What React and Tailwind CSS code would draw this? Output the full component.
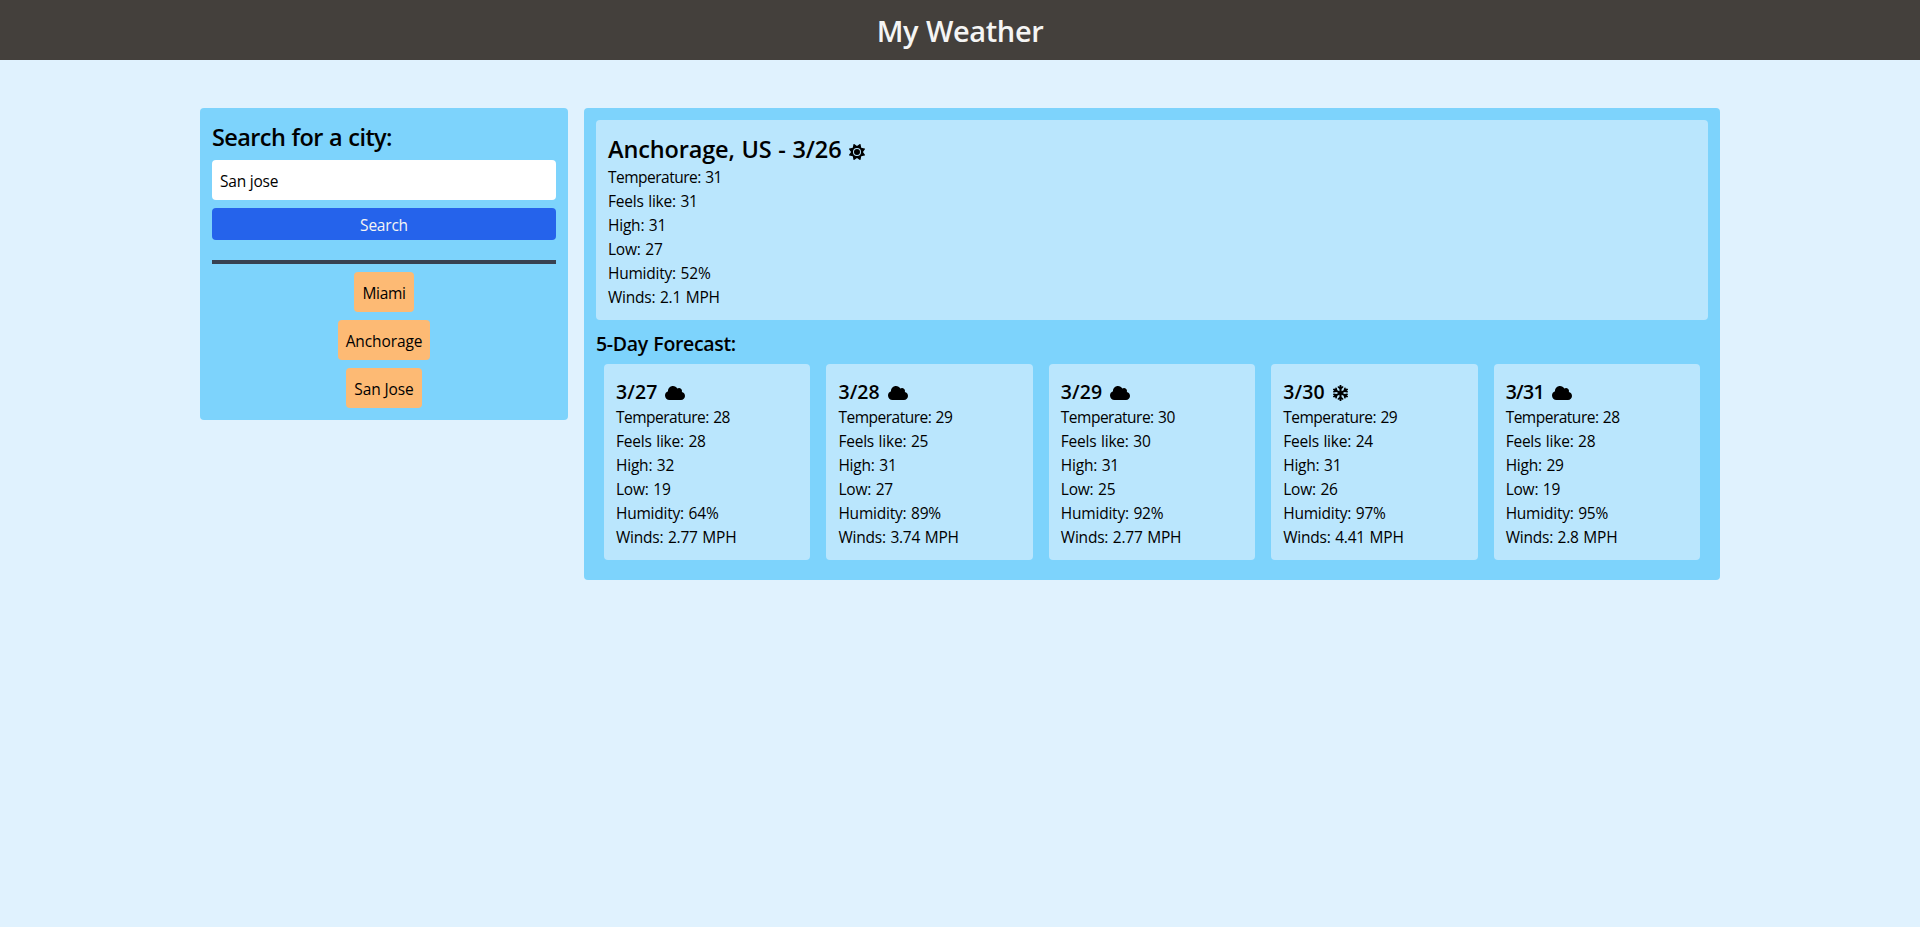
import { FaSun, FaCloud, FaSnowflake } from "react-icons/fa6";

const ICONS = {
  sun: <FaSun className="mt-1.5 h-4 w-4" />,
  cloud: <FaCloud className="mt-0.5 h-4 w-5" />,
  snow: <FaSnowflake preserveAspectRatio="none" className="mt-0.5 h-4 w-[15px]" />,
};

const current = { temp: 31, feels: 31, high: 31, low: 27, humidity: 52, wind: "2.1" };

const forecast = [
  { date: "3/27", icon: "cloud", temp: 28, feels: 28, high: 32, low: 19, humidity: 64, wind: "2.77" },
  { date: "3/28", icon: "cloud", temp: 29, feels: 25, high: 31, low: 27, humidity: 89, wind: "3.74" },
  { date: "3/29", icon: "cloud", temp: 30, feels: 30, high: 31, low: 25, humidity: 92, wind: "2.77" },
  { date: "3/30", icon: "snow", temp: 29, feels: 24, high: 31, low: 26, humidity: 97, wind: "4.41" },
  { date: "3/31", icon: "cloud", temp: 28, feels: 28, high: 29, low: 19, humidity: 95, wind: "2.8" },
];

const cities = ["Miami", "Anchorage", "San Jose"];

function Readings({ data }) {
  return (
    <>
      <p className="tracking-[-0.5px]">Temperature: {data.temp}</p>
      <p>Feels like: {data.feels}</p>
      <p>High: {data.high}</p>
      <p>Low: {data.low}</p>
      <p>Humidity: {data.humidity}%</p>
      <p>Winds: {data.wind} MPH</p>
    </>
  );
}

export default function App() {
  return (
    <div className="min-h-screen bg-[#e0f2fe] font-['Open_Sans','Noto_Sans',sans-serif] text-[15.5px] leading-6 tracking-[-0.22px] text-black [word-spacing:0.8px]">
      <header className="bg-[#44403c] pt-[13px] pb-[11px] text-center">
        <h1 className="text-[29px] leading-9 font-semibold tracking-[-0.4px] text-[#f5f5f4]">My Weather</h1>
      </header>
      <main className="mx-48 mt-10 flex items-start">
        <aside className="m-2 w-[368px] shrink-0 rounded bg-[#7dd3fc] p-3">
          <h2 className="h-8 pt-px text-[23.5px] leading-8 font-semibold tracking-[-0.6px]">Search for a city:</h2>
          <input
            className="mt-2 block h-10 w-full rounded bg-white px-2 pt-[9px] pb-[7px] outline-none"
            defaultValue="San jose"
          />
          <button className="mt-2 block h-8 w-full rounded bg-[#2563eb] pt-[5px] pb-[3px] text-[#f5f5f4]">Search</button>
          <hr className="mt-5 border-t-4 border-[#374151]" />
          <div className="mt-2 flex flex-col items-center gap-2 tracking-[-0.1px]">
            {cities.map((city) => (
              <button key={city} className="rounded bg-[#fdba74] px-2 pt-[9px] pb-[7px] first:tracking-[-0.3px]">
                {city}
              </button>
            ))}
          </div>
        </aside>
        <section className="m-2 flex-1 rounded bg-[#7dd3fc] p-3">
          <div className="rounded bg-[#bae6fd] px-3 pt-[13px] pb-[11px]">
            <h2 className="flex h-8 items-center gap-2 text-[23.5px] leading-8 font-semibold tracking-[-0.14px]">
              <span>Anchorage, US - 3/26</span>
              {ICONS.sun}
            </h2>
            <Readings data={current} />
          </div>
          <h3 className="mt-[10px] mb-[-2px] text-[19.5px] leading-7 font-semibold tracking-[-0.33px]">5-Day Forecast:</h3>
          <div className="group flex">
            {forecast.map((day) => (
              <div key={day.date} className="m-2 flex-1 rounded bg-[#bae6fd] px-3 pt-[13px] pb-[11px] tracking-[-0.22px]">
                <h3
                  className={
                    "flex h-7 items-center gap-2 pt-[2px] text-[19.5px] leading-7 font-semibold " +
                    (day.date.endsWith("1") ? "tracking-[-0.65px]" : "tracking-[0.1px]")
                  }
                >
                  <span>{day.date}</span>
                  {ICONS[day.icon]}
                </h3>
                <Readings data={day} />
              </div>
            ))}
          </div>
        </section>
      </main>
    </div>
  );
}
